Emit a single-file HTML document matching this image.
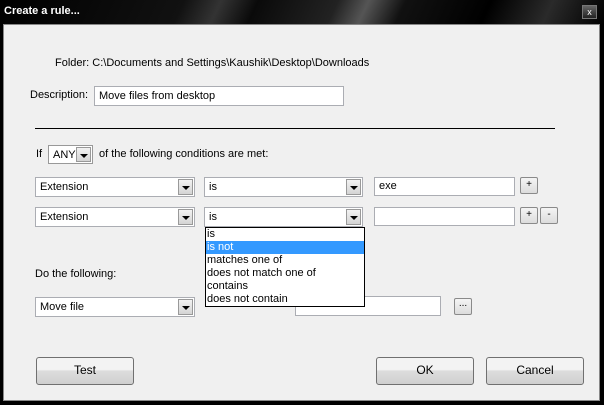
<!DOCTYPE html><html><head><style>
*{box-sizing:border-box}
body{margin:0;width:604px;height:405px;background:#000;font:11px "Liberation Sans",sans-serif;color:#000;position:relative;overflow:hidden}
.a{position:absolute}
#tb{left:0;top:0;width:604px;height:24px;background:linear-gradient(115deg,#000 0%,#111 30%,#333 36%,#0a0a0a 42%,#222 55%,#555 60%,#111 66%,#000 80%,#2a2a2a 90%,#000 100%)}
#cl{left:3px;top:24px;width:597px;height:377px;background:#f0f0f0;border:1px solid #888}
.in{background:#fff;border:1px solid #abadb3;padding:2px 0 0 4px;white-space:nowrap;overflow:hidden}
.cb{background:#fff;border:1px solid #abadb3;padding:3px 0 0 4px}
.ar{position:absolute;right:1px;top:1px;bottom:1px;width:15px;background:linear-gradient(#f2f2f2,#d4d4d4);border:1px solid #999}
.ar:after{content:"";position:absolute;left:3px;top:6px;border:4px solid transparent;border-top:4px solid #000;border-bottom:0}
.sb{background:linear-gradient(#f4f4f4,#dcdcdc);border:1px solid #8a8a8a;border-radius:2px;text-align:center;line-height:14px;font-size:10px}
.bt{background:linear-gradient(#f3f3f3 45%,#dddddd 50%,#cfcfcf);border:1px solid #707070;border-radius:3px;text-align:center;line-height:25px;font-size:12px}
</style></head><body>
<div id="tb" class="a"></div>
<div class="a" style="left:4px;top:5px;color:#fff;font-weight:bold;font-size:11px">Create a rule...</div>
<div class="a" style="left:582px;top:5px;width:15px;height:14px;border:1px solid #777;background:linear-gradient(#666,#222);color:#fff;font-size:9px;text-align:center;line-height:12px">x</div>
<div id="cl" class="a"></div>
<div class="a" style="left:55px;top:57px">Folder: C:\Documents and Settings\Kaushik\Desktop\Downloads</div>
<div class="a" style="left:30px;top:89px">Description:</div>
<div class="a in" style="left:94px;top:86px;width:250px;height:20px;padding-top:3px">Move files from desktop</div>
<div class="a" style="left:35px;top:128px;width:520px;height:1px;background:#000"></div>
<div class="a" style="left:36px;top:148px">If</div>
<div class="a cb" style="left:48px;top:145px;width:45px;height:19px;border-color:#999">ANY<span class="ar"></span></div>
<div class="a" style="left:99px;top:148px">of the following conditions are met:</div>
<div class="a cb" style="left:35px;top:177px;width:160px;height:20px">Extension<span class="ar"></span></div>
<div class="a cb" style="left:204px;top:177px;width:159px;height:20px">is<span class="ar"></span></div>
<div class="a in" style="left:374px;top:177px;width:141px;height:19px">exe</div>
<div class="a sb" style="left:520px;top:177px;width:18px;height:17px">+</div>
<div class="a cb" style="left:35px;top:207px;width:160px;height:20px">Extension<span class="ar"></span></div>
<div class="a cb" style="left:204px;top:207px;width:159px;height:20px">is<span class="ar"></span></div>
<div class="a in" style="left:374px;top:207px;width:141px;height:19px"></div>
<div class="a sb" style="left:520px;top:207px;width:18px;height:17px">+</div>
<div class="a sb" style="left:540px;top:207px;width:18px;height:17px">-</div>
<div class="a" style="left:35px;top:268px">Do the following:</div>
<div class="a cb" style="left:35px;top:297px;width:160px;height:20px">Move file<span class="ar"></span></div>
<div class="a in" style="left:295px;top:296px;width:146px;height:20px"></div>
<div class="a sb" style="left:454px;top:298px;width:18px;height:17px;line-height:10px">...</div>
<div class="a" style="left:205px;top:227px;width:160px;height:80px;background:#fff;border:1px solid #000;line-height:13px;padding-left:1px">
<div>is</div><div style="background:#3399ff;color:#fff;margin-left:-1px;padding-left:1px">is not</div><div>matches one of</div><div>does not match one of</div><div>contains</div><div>does not contain</div></div>
<div class="a bt" style="left:36px;top:357px;width:98px;height:28px">Test</div>
<div class="a bt" style="left:376px;top:357px;width:98px;height:28px">OK</div>
<div class="a bt" style="left:486px;top:357px;width:98px;height:28px">Cancel</div>
</body></html>
